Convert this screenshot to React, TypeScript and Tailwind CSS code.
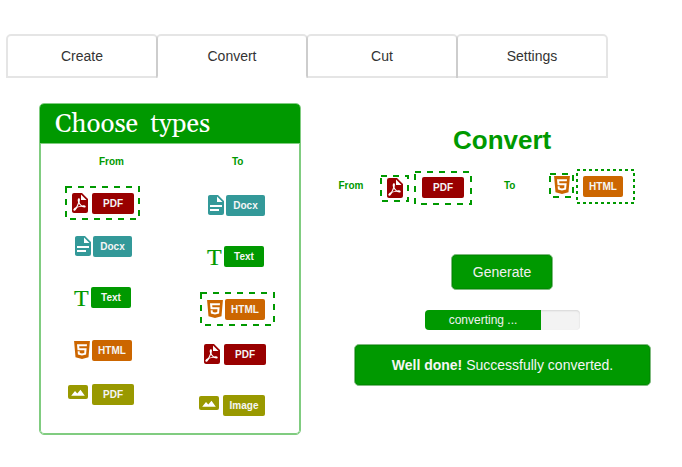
import React from "react";

type Kind = "pdf" | "docx" | "text" | "html" | "image";

const PdfIcon = () => (
  <svg width="16" height="20" viewBox="5 2 16 20" className="block shrink-0 fill-[#990000]">
    <path d="M14,9H19.5L14,3.5V9M7,2H15L21,8V20A2,2 0 0,1 19,22H7C5.89,22 5,21.1 5,20V4A2,2 0 0,1 7,2M11.93,12.44C12.34,13.34 12.86,14.08 13.46,14.59L13.87,14.91C13,15.07 11.8,15.35 10.53,15.84V15.84L10.42,15.88L10.92,14.84C11.37,13.97 11.7,13.18 11.93,12.44M18.41,16.25C18.59,16.07 18.68,15.84 18.69,15.59C18.72,15.39 18.67,15.2 18.57,15.04C18.28,14.57 17.53,14.35 16.29,14.35L15,14.42L14.13,13.84C13.5,13.32 12.93,12.41 12.53,11.28L12.57,11.14C12.9,9.81 13.21,8.2 12.55,7.54C12.39,7.38 12.17,7.3 11.94,7.3H11.7C11.33,7.3 11,7.69 10.91,8.07C10.54,9.4 10.76,10.13 11.13,11.34V11.35C10.88,12.23 10.56,13.25 10.05,14.28L9.09,16.08L8.2,16.57C7,17.32 6.43,18.16 6.32,18.69C6.28,18.88 6.3,19.05 6.37,19.23L6.4,19.28L6.88,19.59L7.32,19.7C8.13,19.7 9.05,18.75 10.29,16.63L10.47,16.56C11.5,16.23 12.78,16 14.5,15.81C15.53,16.32 16.74,16.55 17.5,16.55C17.94,16.55 18.24,16.44 18.41,16.25Z" />
  </svg>
);

const DocIcon = () => (
  <svg width="16" height="20" viewBox="4 2 16 20" className="block shrink-0 fill-[#339999]">
    <path d="M13,9H18.5L13,3.5V9M6,2H14L20,8V20A2,2 0 0,1 18,22H6C4.89,22 4,21.1 4,20V4C4,2.89 4.89,2 6,2M15,18V16H6V18H15M18,14V12H6V14H18Z" />
  </svg>
);

const HtmlIcon = () => (
  <svg width="16" height="18" viewBox="4 3 16 18" className="block shrink-0 fill-[#cc6600]">
    <path d="M12,17.56L16.07,16.43L16.62,10.33H9.38L9.2,8.3H16.8L17,6.31H7L7.56,12.32H14.45L14.22,14.9L12,15.5L9.78,14.9L9.64,13.24H7.64L7.93,16.43L12,17.56M4.07,3H19.93L18.5,19.2L12,21L5.5,19.2L4.07,3Z" />
  </svg>
);

const ImageIcon = () => (
  <svg width="20" height="14" viewBox="0 0 20 14" className="block shrink-0">
    <rect width="20" height="14" rx="2" fill="#999900" />
    <path d="M3.2 10.8L7 6L9.3 8.5L12.5 4.8L16.8 10.8Z" fill="#fff" />
  </svg>
);

const TextIcon = () => (
  <span className="block h-4 w-[15px] shrink-0 font-['Liberation_Serif',serif] text-[24px] leading-[15px] text-[#009900] [-webkit-text-stroke:0.2px_#009900]">
    T
  </span>
);

const icons: Record<Kind, () => React.JSX.Element> = {
  pdf: PdfIcon,
  docx: DocIcon,
  text: TextIcon,
  html: HtmlIcon,
  image: ImageIcon,
};

const tones: Record<Kind, string> = {
  pdf: "bg-[#990000] w-[42px]",
  docx: "bg-[#339999] w-[39px]",
  text: "bg-[#009900] w-[40px]",
  html: "bg-[#cc6600] w-[40px]",
  image: "bg-[#999900] w-[42px]",
};

const Badge = ({ kind, label }: { kind: Kind; label: string }) => (
  <span
    className={`flex h-[21px] shrink-0 items-center justify-center rounded-[2px] text-[10px] font-bold leading-none text-[#f5f5f5] ${tones[kind]}`}
  >
    {label}
  </span>
);

const Selected = ({
  w,
  h,
  dash = "6 6",
  className = "",
  children,
}: {
  w: number;
  h: number;
  dash?: string;
  className?: string;
  children: React.ReactNode;
}) => (
  <div className={`relative flex items-start ${className}`} style={{ width: w, height: h }}>
    <svg width={w} height={h} className="absolute left-0 top-0">
      <rect x="1" y="1" width={w - 2} height={h - 2} fill="none" stroke="#009900" strokeWidth="2" strokeDasharray={dash} />
    </svg>
    {children}
  </div>
);

const TypeRow = ({
  kind,
  label,
  gap,
  drop = "",
}: {
  kind: Kind;
  label: string;
  gap: string;
  drop?: string;
}) => {
  const Icon = icons[kind];
  return (
    <div className={`flex h-[21px] items-start ${gap}`}>
      <div className={drop}>
        <Icon />
      </div>
      <Badge kind={kind} label={label} />
    </div>
  );
};

const Tab = ({ label, active, first }: { label: string; active?: boolean; first?: boolean }) => (
  <button
    className={`flex h-11 w-[152px] items-center justify-center rounded-t-[5px] border-2 border-black/10 text-sm text-[#333] ${
      active ? "border-b-transparent" : ""
    } ${first ? "" : "-ml-[2px]"}`}
  >
    {label}
  </button>
);

export default function App() {
  return (
    <div className="h-[467px] w-[682px] overflow-hidden bg-white pt-[34px] font-['Liberation_Sans',Arial,sans-serif]">
      <nav className="ml-[6px] flex">
        <Tab label="Create" first />
        <Tab label="Convert" active />
        <Tab label="Cut" />
        <Tab label="Settings" />
      </nav>

      <main className="flex items-start pl-[39px] pt-[25px]">
        <section className="flex h-[332px] w-[262px] shrink-0 flex-col overflow-hidden rounded-[5px] border border-[#80cc80]">
          <h1 className="flex h-[40px] shrink-0 items-center whitespace-pre border-b border-[#80cc80] bg-[#009900] pl-[15px] pt-[2px] font-[Gelasio,Georgia,'Noto_Serif','Liberation_Serif',serif] text-[26px] leading-none tracking-[-0.12px] text-white">
            {"Choose  types"}
          </h1>
          <div className="flex grow rounded-b-[4px] border-x border-b border-[#80cc80]">
            <div className="w-[140px] pt-[12px]">
              <h2 className="h-3 pl-[58px] text-[10px] font-bold leading-3 text-[#009900]">From</h2>
              <Selected w={75} h={34} className="ml-[24px] mt-[18px] pl-[7px] pt-[7px]">
                <TypeRow kind="pdf" label="PDF" gap="gap-[4px]" />
              </Selected>
              <div className="ml-[34px] mt-[16px]">
                <TypeRow kind="docx" label="Docx" gap="gap-[2px]" />
              </div>
              <div className="ml-[33px] mt-[30px]">
                <TypeRow kind="text" label="Text" gap="gap-[2px]" drop="mt-[4px]" />
              </div>
              <div className="ml-[33px] mt-[32px]">
                <TypeRow kind="html" label="HTML" gap="gap-[2px]" drop="mt-px" />
              </div>
              <div className="ml-[27px] mt-[23px]">
                <TypeRow kind="image" label="PDF" gap="gap-[4px]" drop="mt-px" />
              </div>
            </div>
            <div className="w-[118px] pt-[12px]">
              <h2 className="h-3 pl-[51px] text-[10px] font-bold leading-3 text-[#009900]">To</h2>
              <div className="ml-[27px] mt-[27px]">
                <TypeRow kind="docx" label="Docx" gap="gap-[2px]" />
              </div>
              <div className="ml-[26px] mt-[30px]">
                <TypeRow kind="text" label="Text" gap="gap-[2px]" drop="mt-[4px]" />
              </div>
              <Selected w={75} h={34} className="ml-[19px] mt-[25px] pl-[7px] pt-[7px]">
                <TypeRow kind="html" label="HTML" gap="gap-[2px]" drop="mt-px" />
              </Selected>
              <div className="ml-[23px] mt-[18px]">
                <TypeRow kind="pdf" label="PDF" gap="gap-[4px]" />
              </div>
              <div className="ml-[18px] mt-[30px]">
                <TypeRow kind="image" label="Image" gap="gap-[4px]" drop="mt-px" />
              </div>
            </div>
          </div>
        </section>

        <section className="flex w-[314px] shrink-0 flex-col pl-[37px] pt-[21px]">
          <h2 className="ml-[115px] h-[32px] text-[26px] font-bold leading-[32px] text-[#009900]">Convert</h2>
          <div className="mt-[13px] flex h-[36px] w-[298px] items-start text-[10px] font-bold leading-3 text-[#009900]">
            <span className="mt-[11px] w-[42px] shrink-0 pl-[0.5px]">From</span>
            <Selected w={29} h={27} className="mt-[6px] shrink-0 pl-[7px] pt-[3px]">
              <PdfIcon />
            </Selected>
            <Selected w={58} h={34} className="ml-[5px] mt-[2px] shrink-0 pl-[8px] pt-[6px]">
              <Badge kind="pdf" label="PDF" />
            </Selected>
            <span className="ml-[32px] mt-[11px] w-[45px] shrink-0">To</span>
            <Selected w={25} h={25} className="mt-[4px] shrink-0 pl-[5px] pt-[3px]">
              <HtmlIcon />
            </Selected>
            <Selected w={59} h={35} dash="3 3" className="ml-[2px] shrink-0 pl-[7px] pt-[7px]">
              <Badge kind="html" label="HTML" />
            </Selected>
          </div>
          <button className="ml-[113px] mt-[49px] flex h-9 w-[102px] items-center justify-center rounded-[5px] border border-[#80bb80] bg-[#009900] text-sm text-[#f0f0f0] shadow-[inset_0_0_0_1px_#008c00]">
            Generate
          </button>
          <div className="ml-[87px] mt-[20px] flex h-5 w-[155px] overflow-hidden rounded-[4px] bg-[#f3f3f3] shadow-[inset_0_1px_2px_rgba(0,0,0,0.12)]">
            <div className="flex w-[116px] items-center justify-center bg-[#009900] text-xs text-[#f0f0f0]">converting ...</div>
          </div>
          <div className="ml-[16px] mt-[14px] flex h-[42px] w-[297px] items-center justify-center rounded-[5px] border border-[#80bb80] bg-[#009900] text-sm text-[#f5f5f5] shadow-[inset_0_0_0_1px_#008c00]">
            <p>
              <strong>Well done!</strong> Successfully converted.
            </p>
          </div>
        </section>
      </main>
    </div>
  );
}
